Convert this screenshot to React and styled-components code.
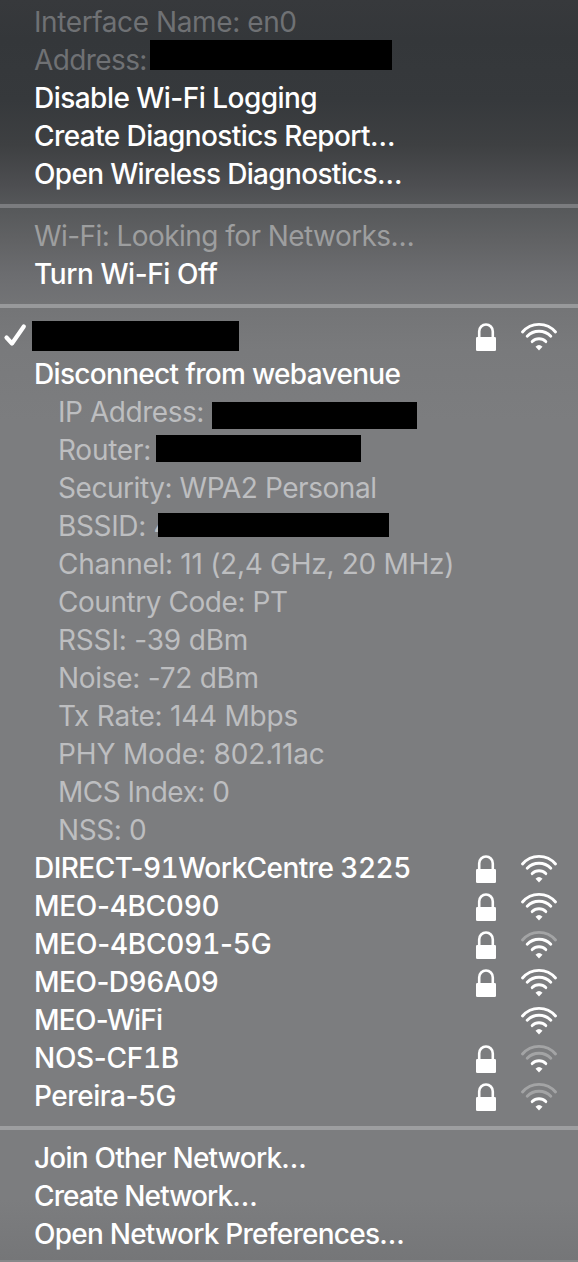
import React from 'react';
import styled, { createGlobalStyle } from 'styled-components';

const GlobalStyle = createGlobalStyle`
  body {
    margin: 0;
    background: #7c7d7f;
  }
`;

const tones = {
  active: '#fff',
  top: '#6f7174',
  status: '#9d9e9f',
  detail: '#bdbec0',
};

const Menu = styled.div`
  box-sizing: border-box;
  width: 578px;
  height: 1262px;
  padding-top: 3px;
  overflow: hidden;
  border-bottom: 2px solid #87888a;
  background: linear-gradient(
    #37393c 0,
    #34373a 40px,
    #36393c 100px,
    #3e4042 145px,
    #4d4e51 185px,
    #57595b 210px,
    #616264 240px,
    #6c6d70 275px,
    #747577 310px,
    #797a7c 350px,
    #7c7d7f 420px,
    #7c7d7f 1200px,
    #757678 1260px
  );
  font-family: Inter, 'Liberation Sans', sans-serif;
  font-size: 28px;
`;

const Separator = styled.div`
  height: 4px;
  margin: 11px 0 9px;
  background: ${({ color }) => color || '#9d9ea0'};
`;

const Row = styled.div`
  position: relative;
  display: flex;
  align-items: center;
  height: 38px;
  padding-left: ${({ $indent }) => ($indent ? 58 : 34)}px;
  padding-right: 20px;
  white-space: nowrap;
  color: ${({ $tone }) => tones[$tone || 'active']};
  font-weight: ${({ $tone }) => ($tone ? 400 : 500)};
`;

const Label = styled.span`
  flex: 1;
  letter-spacing: ${({ $spacing }) => $spacing || 0}px;
`;

const Digits = styled.span`
  font-variant-numeric: tabular-nums;
`;

// Hides a private value; drawn over the row it belongs to
const Redaction = styled.div`
  position: absolute;
  left: ${({ $left }) => $left}px;
  top: ${({ $top }) => $top}px;
  width: ${({ $width }) => $width}px;
  height: ${({ $height }) => $height}px;
  background: #000;
`;

const Check = styled.svg`
  position: absolute;
  left: 3px;
  top: 5px;
`;

const Icons = styled.div`
  display: flex;
  align-items: center;
  gap: 23px;
  padding-top: 2px;
`;

const LockIcon = () => (
  <svg width="22" height="30" viewBox="0 0 22 30">
    <path d="M4.2 16V9.4a6.8 6.9 0 0 1 13.6 0V16" fill="none" stroke="#fff" strokeWidth="2.6" />
    <rect x="1" y="15" width="20" height="14" rx="1.3" fill="#fff" />
  </svg>
);

const WifiIcon = ({ level }) => (
  <svg width="38" height="30" viewBox="0 0 38 30" fill="none" stroke="#fff" strokeWidth="2.9" strokeLinecap="round">
    <path d="M2.5 10A21.6 21.6 0 0 1 35.5 10" opacity={level > 3 ? 1 : 0.3} />
    <path d="M7.2 14.3A16.4 16.4 0 0 1 30.8 14.3" opacity={level > 2 ? 1 : 0.3} />
    <path d="M12.2 19.6A9.6 9.6 0 0 1 25.8 19.6" />
    <path d="M15.5 24.8Q19 21.2 22.5 24.8L19 28.6Z" fill="#fff" stroke="none" />
  </svg>
);

// Only the digits are tabular, the hyphens keep their normal width
const NetworkName = ({ name, spacing }) => (
  <Label $spacing={spacing}>
    {name.split(/(\d+)/).map((part, i) => (i % 2 ? <Digits key={i}>{part}</Digits> : part))}
  </Label>
);

const Network = ({ name = '', spacing, locked = true, level = 4, children }) => (
  <Row>
    {children}
    <NetworkName name={name} spacing={spacing} />
    <Icons>
      {locked && <LockIcon />}
      <WifiIcon level={level} />
    </Icons>
  </Row>
);

const details = [
  { text: 'IP Address:', spacing: -0.45, bar: { $left: 212, $top: 9, $width: 205, $height: 27 } },
  { text: 'Router:', spacing: -0.25, bar: { $left: 156, $top: 4, $width: 205, $height: 27 } },
  { text: 'Security: WPA2 Personal', spacing: -0.45 },
  { text: 'BSSID: 4', spacing: -0.35, bar: { $left: 158, $top: 6, $width: 231, $height: 24 } },
  { text: 'Channel: 11 (2,4 GHz, 20 MHz)', spacing: -0.28 },
  { text: 'Country Code: PT', spacing: -0.45 },
  { text: 'RSSI: -39 dBm', spacing: -0.18 },
  { text: 'Noise: -72 dBm', spacing: -0.28 },
  { text: 'Tx Rate: 144 Mbps', spacing: -0.24 },
  { text: 'PHY Mode: 802.11ac', spacing: -0.15 },
  { text: 'MCS Index: 0', spacing: -0.5 },
  { text: 'NSS: 0', spacing: -0.4 },
];

const networks = [
  { name: 'DIRECT-91WorkCentre 3225', spacing: -0.54 },
  { name: 'MEO-4BC090', spacing: -0.3 },
  { name: 'MEO-4BC091-5G', level: 3, spacing: -0.23 },
  { name: 'MEO-D96A09', spacing: -0.5 },
  { name: 'MEO-WiFi', locked: false, spacing: -0.75 },
  { name: 'NOS-CF1B', level: 2, spacing: -0.3 },
  { name: 'Pereira-5G', level: 2, spacing: -0.46 },
];

const App = () => (
  <>
    <GlobalStyle />
    <Menu>
      <Row $tone="top">
        <Label $spacing={-0.4}>Interface Name: en0</Label>
      </Row>
      <Row $tone="top">
        <Label $spacing={-0.6}>Address:</Label>
        <Redaction $left={150} $top={-1} $width={242} $height={30} />
      </Row>
      <Row>
        <Label $spacing={-0.53}>Disable Wi-Fi Logging</Label>
      </Row>
      <Row>
        <Label $spacing={-0.58}>Create Diagnostics Report…</Label>
      </Row>
      <Row>
        <Label $spacing={-0.67}>Open Wireless Diagnostics…</Label>
      </Row>
      <Separator color="#7b7c7f" />
      <Row $tone="status">
        <Label $spacing={-0.56}>Wi-Fi: Looking for Networks…</Label>
      </Row>
      <Row>
        <Label $spacing={-0.42}>Turn Wi-Fi Off</Label>
      </Row>
      <Separator color="#98999b" />
      <Network>
        <Check width="26" height="28" viewBox="0 0 26 28">
          <path d="M3.5 15.5L9 21.5L20.8 4.5" fill="none" stroke="#fff" strokeWidth="4.2" strokeLinecap="round" strokeLinejoin="round" />
        </Check>
        <Redaction $left={32} $top={4} $width={207} $height={30} />
      </Network>
      <Row>
        <Label $spacing={-0.68}>Disconnect from webavenue</Label>
      </Row>
      {details.map(({ text, spacing, bar }) => (
        <Row key={text} $tone="detail" $indent>
          <Label $spacing={spacing}>{text}</Label>
          {bar && <Redaction {...bar} />}
        </Row>
      ))}
      {networks.map(network => (
        <Network key={network.name} {...network} />
      ))}
      <Separator />
      <Row>
        <Label $spacing={-0.77}>Join Other Network…</Label>
      </Row>
      <Row>
        <Label $spacing={-0.9}>Create Network…</Label>
      </Row>
      <Row>
        <Label $spacing={-0.76}>Open Network Preferences…</Label>
      </Row>
    </Menu>
  </>
);

export default App;
